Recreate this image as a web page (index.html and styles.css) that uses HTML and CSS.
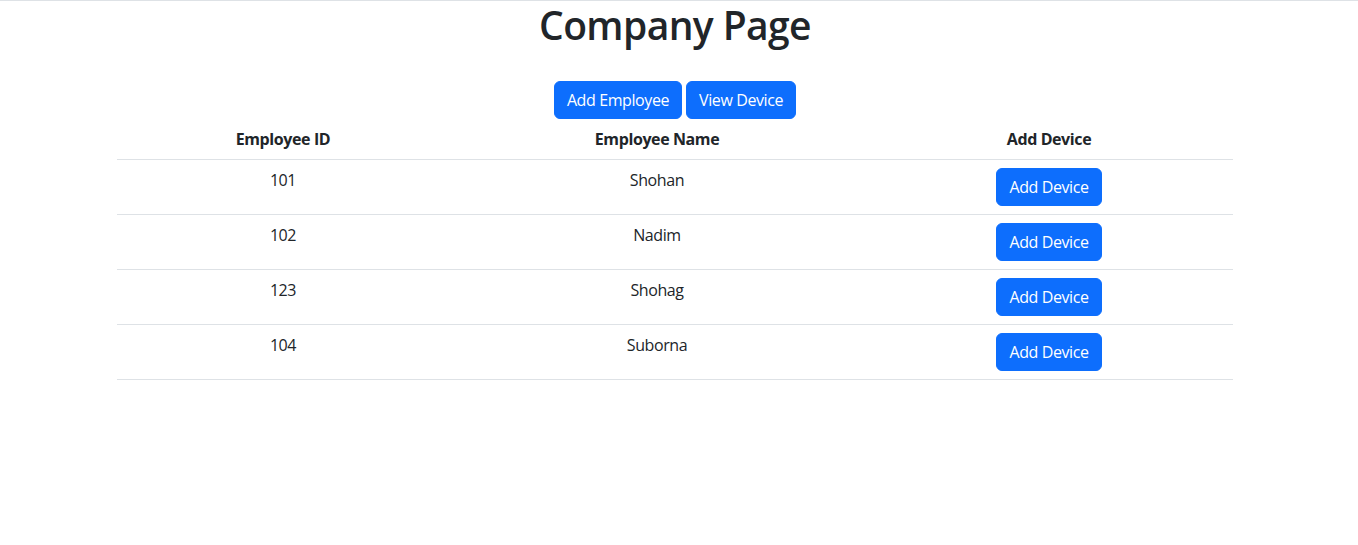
FILE: index.html
```html
<!DOCTYPE html>
<html lang="en">
<head>
<meta charset="utf-8">
<title>Company Page</title>
<link rel="stylesheet" href="styles.css">
</head>
<body>
<div class="page">
  <div class="container">
    <h1 class="title">Company Page</h1>
    <div class="actions">
      <button class="btn">Add Employee</button>
      <button class="btn">View Device</button>
    </div>
    <table class="table">
      <thead>
        <tr>
          <th class="c1">Employee ID</th>
          <th class="c2">Employee Name</th>
          <th class="c3">Add Device</th>
        </tr>
      </thead>
      <tbody>
        <tr><td>101</td><td>Shohan</td><td><button class="btn">Add Device</button></td></tr>
        <tr><td>102</td><td>Nadim</td><td><button class="btn">Add Device</button></td></tr>
        <tr><td>123</td><td>Shohag</td><td><button class="btn">Add Device</button></td></tr>
        <tr><td>104</td><td>Suborna</td><td><button class="btn">Add Device</button></td></tr>
      </tbody>
    </table>
  </div>
</div>
</body>
</html>
```
FILE: styles.css
```css
* { box-sizing: border-box; }
html, body { margin: 0; padding: 0; }
body {
  border-top: 1px solid #dee2e6;
  font-family: "Open Sans", "Noto Sans", sans-serif;
  font-size: 16px;
  line-height: 24px;
  letter-spacing: -0.4px;
  color: #212529;
  background: #fff;
}
.page { padding-right: 8px; }
.container { width: 1116px; margin: 0 auto; }
.title {
  margin: 0 0 32px;
  font-size: 39px;
  line-height: 48px;
  font-weight: 600;
  letter-spacing: -0.6px;
  text-align: center;
}
.actions {
  display: flex;
  justify-content: center;
  gap: 4px;
}
.btn {
  font-family: inherit;
  font-size: 16px;
  line-height: 24px;
  letter-spacing: inherit;
  padding: 6px 12px;
  border: 1px solid #0d6efd;
  border-radius: 6px;
  background: #0d6efd;
  color: #fff;
}
.table {
  width: 100%;
  border-collapse: collapse;
  table-layout: fixed;
}
.table th, .table td {
  padding: 8px;
  text-align: center;
  vertical-align: top;
  border-bottom: 1px solid #dee2e6;
}
.table th { font-weight: 700; }
.c1 { width: 332px; }
.c2 { width: 416px; }
.c3 { width: 368px; }
```
